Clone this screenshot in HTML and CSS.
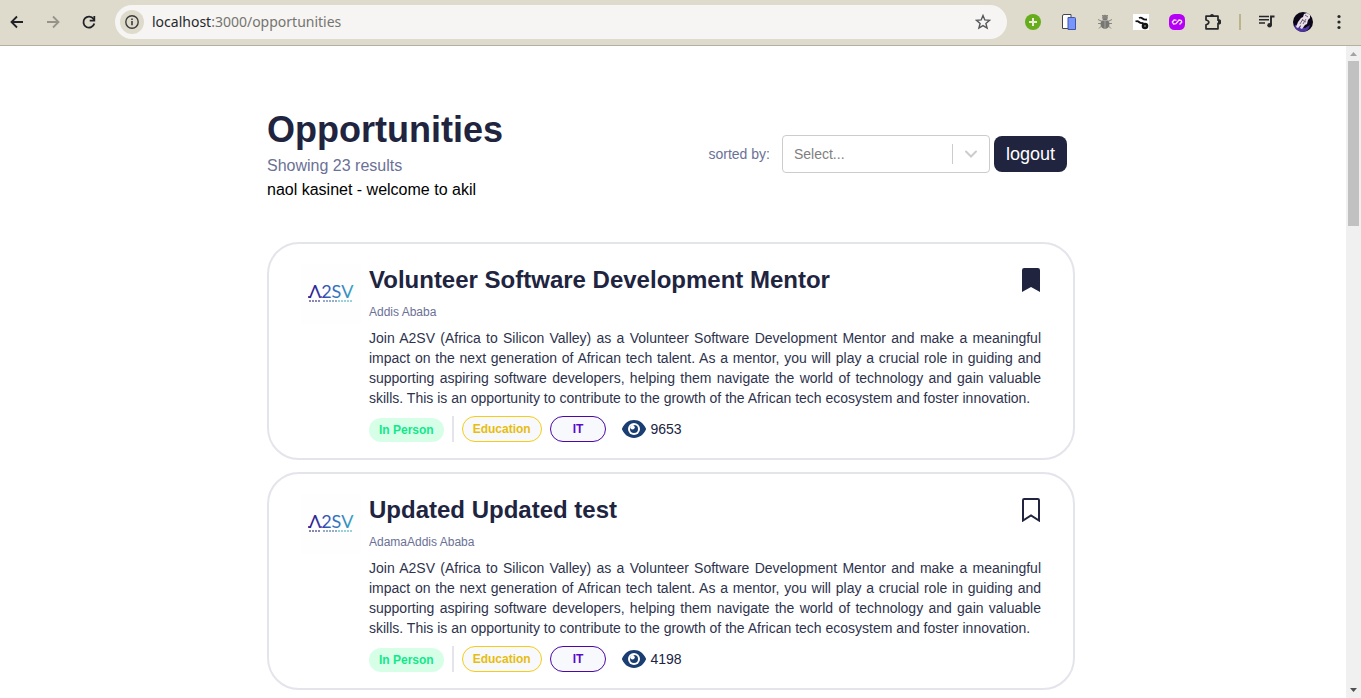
FILE: index.html
```html
<!DOCTYPE html>
<html lang="en">
<head>
<meta charset="utf-8">
<title>Opportunities</title>
<link rel="stylesheet" href="styles.css">
</head>
<body>
<svg class="defs" aria-hidden="true">
  <defs>
    <linearGradient id="brand" x1="0" x2="1" y1="0" y2="0">
      <stop offset="0" stop-color="#2a0f86"/>
      <stop offset="0.4" stop-color="#3457b8"/>
      <stop offset="1" stop-color="#35a6c4"/>
    </linearGradient>
    <symbol id="logo" viewBox="0 0 60 60">
      <rect width="60" height="60" fill="#fefefe"/>
      <text class="logo-text" x="8" y="34" fill="url(#brand)">Λ2SV</text>
      <g fill="none" stroke-width="2" stroke-dasharray="2 1" opacity="0.6">
        <path d="M8 37h11" stroke="#3b3a80"/>
        <path d="M22 37h14" stroke="#5577a8"/>
        <path d="M37 37h14" stroke="#55b5c4"/>
      </g>
      <circle cx="8" cy="33" r="1" fill="#2a0f86"/>
      <circle cx="20" cy="33" r="1" fill="#5a3fae"/>
    </symbol>
    <symbol id="eye" viewBox="0 0 24 20">
      <path d="M12 1C6.500 1 2.400 4.400.2 9.200a1.600 1.600 0 0 0 0 1.600C2.400 15.600 6.500 19 12 19s9.600-3.400 11.800-8.200a1.600 1.600 0 0 0 0-1.600C21.600 4.400 17.500 1 12 1Z" fill="#1a3e72"/>
      <circle cx="12" cy="10" r="6" fill="#fff"/>
      <circle cx="12" cy="10" r="4" fill="#1a3e72"/>
      <circle cx="10.500" cy="8.300" r="2.200" fill="#fff"/>
    </symbol>
  </defs>
</svg>

<header class="toolbar">
  <nav class="nav-buttons" aria-label="Browser navigation">
    <button class="icon-button" aria-label="Back"><svg width="16" height="16" viewBox="0 0 16 16"><path d="M14 8H3M8 2.500 2.500 8 8 13.500" fill="none" stroke="#202226" stroke-width="1.800"/></svg></button>
    <button class="icon-button" aria-label="Forward"><svg width="16" height="16" viewBox="0 0 16 16"><path d="M2 8h11M8 2.500 13.500 8 8 13.500" fill="none" stroke="#96948a" stroke-width="1.800"/></svg></button>
    <button class="icon-button" aria-label="Reload"><svg width="16" height="16" viewBox="0 0 16 16"><path d="M13.300 9.500A5.500 5.500 0 1 1 12.500 5L13.500 6.200" fill="none" stroke="#202226" stroke-width="1.800"/><path d="M13.300 2v4.700H8.700" fill="none" stroke="#202226" stroke-width="1.800"/></svg></button>
  </nav>
  <div class="address">
    <button class="site-info" aria-label="Site information"><svg width="16" height="16" viewBox="0 0 16 16"><circle cx="8" cy="8" r="6.200" fill="none" stroke="#3a3b3c" stroke-width="1.400"/><path d="M8 7v4.200M8 4.500v1.600" stroke="#3a3b3c" stroke-width="1.600"/></svg></button>
    <p class="url"><span class="host">localhost</span>:3000/opportunities</p>
    <button class="icon-button" aria-label="Bookmark this page"><svg width="16" height="16" viewBox="0 0 16 16"><path d="m8 1.500 1.800 4.400 4.800.4-3.700 3.100 1.200 4.700L8 11.600l-4.100 2.500 1.200-4.700-3.700-3.100 4.800-.4Z" fill="none" stroke="#55575b" stroke-width="1.400"/></svg></button>
  </div>
  <div class="extensions">
    <button class="icon-button" aria-label="Add"><svg width="16" height="16" viewBox="0 0 16 16"><circle cx="8" cy="8" r="8" fill="#65ad1b"/><path d="M8 4v8M4 8h8" stroke="#eee9d9" stroke-width="2"/></svg></button>
    <button class="icon-button" aria-label="Pages"><svg width="16" height="16" viewBox="0 0 16 16"><path d="M1.500 2q0-1.500 1.500-1.500h7V14.500H1.500Z" fill="#fff" stroke="#45464c"/><path d="M7 3.500h6.500q1 0 1 1v11H7Z" fill="#7795fb" stroke="#4254a8"/></svg></button>
    <button class="icon-button" aria-label="Debugger"><svg width="16" height="16" viewBox="0 0 16 16"><path d="M1 5.500 4 7M1 9.500h3M2 14.500l3-3M15 5.500 12 7M15 9.500h-3M14 14.500l-3-3M5 1l2 2M11 1 9 3" stroke="#88867e" fill="none"/><circle cx="8" cy="3.500" r="2.800" fill="#85847f"/><ellipse cx="8" cy="10" rx="4.500" ry="5" fill="#777672"/><path d="M4 6.500h8M8 7v8" stroke="#b1afa5" stroke-width=".8"/></svg></button>
    <button class="icon-button" aria-label="Waves"><svg width="16" height="16" viewBox="0 0 16 16"><path fill="#fff" d="M0 0h16v16H0z"/><path d="M6 4q2-1 3.500.5T14 5.500M2.500 7.500q2-1 3.500.5t4.500 1" fill="none" stroke="#111" stroke-width="1.900"/><circle cx="12" cy="12" r="3.300" fill="#151515"/><circle cx="12" cy="12" r="1" fill="#777"/></svg></button>
    <button class="icon-button" aria-label="Loop"><svg width="16" height="16" viewBox="0 0 16 16"><rect width="16" height="16" rx="5.500" fill="#b500f5"/><path d="M7.500 6.300 5.300 5.800 3.300 8l1.400 2.200 2.300-.5 3-3.700 2 .3.800 1.700-2.300 2.500" fill="none" stroke="#f8e5ff" stroke-width="1.300" stroke-linejoin="round"/></svg></button>
    <button class="icon-button" aria-label="Extensions"><svg width="16" height="16" viewBox="0 0 16 16"><path d="M1 2.200h12v4h.5a1.500 1.500 0 0 1 0 3.200H13v5.400H1v-4Q3.800 10 3.800 8.300T1 6Z" fill="none" stroke="#25272a" stroke-width="1.700" stroke-linejoin="round"/><path d="M5 2a2 2 0 0 1 4 0ZM13 6.500a1.500 1.500 0 0 1 2.800 1.500A1.500 1.500 0 0 1 13 9.500Z" fill="#25272a"/></svg></button>
    <span class="divider"></span>
    <button class="icon-button" aria-label="Media controls"><svg width="16" height="16" viewBox="0 0 16 16"><path d="M0 2.500h10M0 5.800h10M0 9h6" stroke="#25272a" stroke-width="1.600"/><path d="M12 11.200V2.500h3.500" fill="none" stroke="#25272a" stroke-width="1.900"/><circle cx="10.600" cy="11.300" r="2.300" fill="#25272a"/></svg></button>
    <button class="icon-button profile" aria-label="Profile"><svg width="20" height="20" viewBox="0 0 20 20"><circle cx="10" cy="10" r="10" fill="#0c0718"/><path d="M1 14Q4 11 6 15l6 1 5-3q-1 6-7 7-6 0-9-6Z" fill="#4f35a0"/><path d="m8 6 2-1 1-3 3-1 3 2 0 3-2 2-1 4-2 1-3 4-2-1 1-3-3 3-2-1 2-5Z" fill="#e8dfe8"/><path d="m10 7-3 5M13 7l-3 5M9 8l4 2M12 3l3 2" stroke="#786278" stroke-width="1"/></svg></button>
    <button class="icon-button" aria-label="Menu"><svg width="16" height="16" viewBox="0 0 16 16" fill="#25272a"><circle cx="8" cy="2.500" r="1.600"/><circle cx="8" cy="8" r="1.600"/><circle cx="8" cy="13.500" r="1.600"/></svg></button>
  </div>
</header>

<div class="viewport">
  <main class="page">
    <div class="column">
      <section class="heading">
        <div>
          <h1 class="title">Opportunities</h1>
          <p class="results">Showing 23 results</p>
          <p class="welcome">naol kasinet - welcome to akil</p>
        </div>
        <div class="controls">
          <label class="sort-label" for="sort">sorted by:</label>
          <div class="select-box">
            <select class="select" id="sort"><option>Select...</option></select>
            <span class="select-indicator"><svg width="20" height="20" viewBox="0 0 20 20"><path d="m5 7.500 5 5 5-5" fill="none" stroke="#ccc" stroke-width="2" stroke-linecap="round"/></svg></span>
          </div>
          <button class="logout">logout</button>
        </div>
      </section>

      <div class="cards">
        <article class="card">
          <svg class="logo" role="img" aria-label="A2SV"><use href="#logo"/></svg>
          <div class="card-body">
            <div class="card-head">
              <h2 class="card-title">Volunteer Software Development Mentor</h2>
              <button class="icon-button" aria-label="Remove bookmark"><svg width="20" height="24" viewBox="0 0 20 24"><path d="M1 24V2.200Q1 0 3.200 0h13.600Q19 0 19 2.200V24l-9-5Z" fill="#20243f"/></svg></button>
            </div>
            <p class="location">Addis Ababa</p>
            <p class="description">Join A2SV (Africa to Silicon Valley) as a Volunteer Software Development Mentor and make a meaningful impact on the next generation of African tech talent. As a mentor, you will play a crucial role in guiding and supporting aspiring software developers, helping them navigate the world of technology and gain valuable skills. This is an opportunity to contribute to the growth of the African tech ecosystem and foster innovation.</p>
            <div class="tags">
              <span class="tag tag-mode">In Person</span>
              <span class="tag-divider"></span>
              <span class="tag tag-education">Education</span>
              <span class="tag tag-it">IT</span>
              <span class="views"><svg width="24" height="20"><use href="#eye"/></svg>9653</span>
            </div>
          </div>
        </article>

        <article class="card">
          <svg class="logo" role="img" aria-label="A2SV"><use href="#logo"/></svg>
          <div class="card-body">
            <div class="card-head">
              <h2 class="card-title">Updated Updated test</h2>
              <button class="icon-button" aria-label="Add bookmark"><svg width="20" height="24" viewBox="0 0 20 24"><path d="M2 22.500V2.200Q2 1 3.200 1h13.600Q18 1 18 2.200v20.300l-8-5Z" fill="none" stroke="#20243f" stroke-width="2"/></svg></button>
            </div>
            <p class="location">AdamaAddis Ababa</p>
            <p class="description">Join A2SV (Africa to Silicon Valley) as a Volunteer Software Development Mentor and make a meaningful impact on the next generation of African tech talent. As a mentor, you will play a crucial role in guiding and supporting aspiring software developers, helping them navigate the world of technology and gain valuable skills. This is an opportunity to contribute to the growth of the African tech ecosystem and foster innovation.</p>
            <div class="tags">
              <span class="tag tag-mode">In Person</span>
              <span class="tag-divider"></span>
              <span class="tag tag-education">Education</span>
              <span class="tag tag-it">IT</span>
              <span class="views"><svg width="24" height="20"><use href="#eye"/></svg>4198</span>
            </div>
          </div>
        </article>
      </div>
    </div>
  </main>
  <div class="scrollbar" aria-hidden="true">
    <svg width="15" height="15" viewBox="0 0 15 15"><path d="m4 10 3.500-4 3.500 4Z" fill="#a3a3a3"/></svg>
    <span class="track"><span class="thumb"></span></span>
    <svg width="15" height="15" viewBox="0 0 15 15"><path d="m4 5 3.500 4L11 5Z" fill="#505050"/></svg>
  </div>
</div>
</body>
</html>
```
FILE: styles.css
```css
* {
  box-sizing: border-box;
}

body {
  display: flex;
  flex-direction: column;
  height: 100vh;
  margin: 0;
  overflow: hidden;
  background: #fff;
  font-family: "Liberation Sans", Arial, sans-serif;
}

h1, h2, p {
  margin: 0;
}

button {
  margin: 0;
  padding: 0;
  border: 0;
  background: none;
  font-family: inherit;
  cursor: pointer;
}

svg {
  display: block;
  flex: none;
}

.defs {
  position: absolute;
  width: 0;
  height: 0;
}

/* Browser toolbar */
.toolbar {
  display: flex;
  flex: none;
  align-items: center;
  padding: 5px 14px 6px 9px;
  border-bottom: 1px solid #b4b1a3;
  background: #dedbcc;
}

.nav-buttons {
  display: flex;
  gap: 20px;
  margin-right: 18px;
}

.icon-button {
  display: flex;
  flex: none;
}

.address {
  display: flex;
  flex: 1;
  align-items: center;
  gap: 8px;
  height: 34px;
  padding: 0 16px 0 5px;
  border-radius: 17px;
  background: #f6f5f3;
}

.site-info {
  display: flex;
  align-items: center;
  justify-content: center;
  width: 24px;
  height: 24px;
  border-radius: 50%;
  background: #dedbcc;
}

.url {
  flex: 1;
  color: #75746f;
  font-family: "Noto Sans", sans-serif;
  font-size: 14px;
  line-height: 20px;
}

.host {
  color: #27282a;
}

.extensions {
  display: flex;
  align-items: center;
  gap: 20px;
  margin-left: 18px;
}

.divider {
  width: 2px;
  height: 16px;
  margin: 0 -2px;
  background: #bdb38a;
}

.profile {
  margin: 0 -2px;
}

/* Page area */
.viewport {
  display: flex;
  flex: 1;
  min-height: 0;
}

.page {
  flex: 1;
  overflow: hidden;
  padding-right: 4px;
}

.column {
  width: 808px;
  max-width: 100%;
  margin: 0 auto;
  padding-top: 60px;
}

.heading {
  display: flex;
  align-items: center;
  justify-content: space-between;
  padding-right: 8px;
}

.title {
  color: #20243f;
  font-size: 36px;
  line-height: 48px;
}

.results {
  color: #6b7196;
  font-size: 16px;
  line-height: 24px;
}

.welcome {
  color: #000;
  font-size: 16px;
  line-height: 24px;
}

.controls {
  display: flex;
  align-items: center;
  gap: 4px;
}

.sort-label {
  margin-right: 8px;
  color: #6b7196;
  font-size: 14px;
  line-height: 20px;
}

.select-box {
  display: grid;
  width: 208px;
  height: 38px;
}

.select {
  grid-area: 1 / 1;
  appearance: none;
  padding: 0 48px 0 11px;
  border: 1px solid #ccc;
  border-radius: 4px;
  background: #fff;
  color: #808080;
  font-family: inherit;
  font-size: 14px;
}

.select-indicator {
  display: flex;
  grid-area: 1 / 1;
  align-items: center;
  align-self: center;
  justify-self: end;
  padding: 0 9px 0 8px;
  border-left: 1px solid #ccc;
  pointer-events: none;
}

.logout {
  padding: 4px 12px;
  border-radius: 8px;
  background: #20243f;
  color: #fff;
  font-size: 18px;
  line-height: 28px;
}

.cards {
  display: grid;
  gap: 12px;
  margin-top: 40px;
}

.card {
  display: flex;
  gap: 8px;
  padding: 20px 32px 16px;
  border: 2px solid #e4e4eb;
  border-radius: 32px;
}

.logo {
  width: 60px;
  height: 60px;
}

.logo-text {
  font-family: Lato, sans-serif;
  font-size: 18px;
}

.card-body {
  flex: 1;
}

.card-head {
  display: flex;
  align-items: center;
  justify-content: space-between;
}

.card-title {
  color: #20243f;
  font-size: 24px;
  line-height: 32px;
}

.location {
  margin: 8px 0;
  color: #6b7196;
  font-size: 12px;
  line-height: 16px;
}

.description {
  color: #2e334d;
  font-size: 14px;
  line-height: 20px;
  text-align: justify;
}

.tags {
  display: flex;
  align-items: center;
  gap: 8px;
  margin-top: 8px;
}

.tag {
  padding: 4px 10px;
  border: 1px solid;
  border-radius: 13px;
  background: #f8f9fc;
  font-size: 12px;
  font-weight: bold;
  line-height: 16px;
}

.tag-mode {
  align-self: flex-end;
  padding: 4px 10px;
  border: 0;
  background: #d7ffe8;
  color: #11e88a;
}

.tag-education {
  border-color: #f5cc16;
  color: #e6bd10;
}

.tag-it {
  padding: 4px 22px;
  border-color: #4b08a6;
  color: #5c0bcb;
}

.tag-divider {
  align-self: stretch;
  width: 2px;
  background: #e4e4eb;
}

.views {
  display: flex;
  align-items: center;
  gap: 4px;
  margin-left: 8px;
  color: #20243f;
  font-size: 14px;
  line-height: 20px;
}

/* Scrollbar */
.scrollbar {
  display: flex;
  flex: none;
  flex-direction: column;
  width: 15px;
  background: #f0f0f0;
}

.track {
  flex: 1;
  padding: 0 2px;
}

.thumb {
  display: block;
  height: 165px;
  background: #c1c1c1;
}
```
